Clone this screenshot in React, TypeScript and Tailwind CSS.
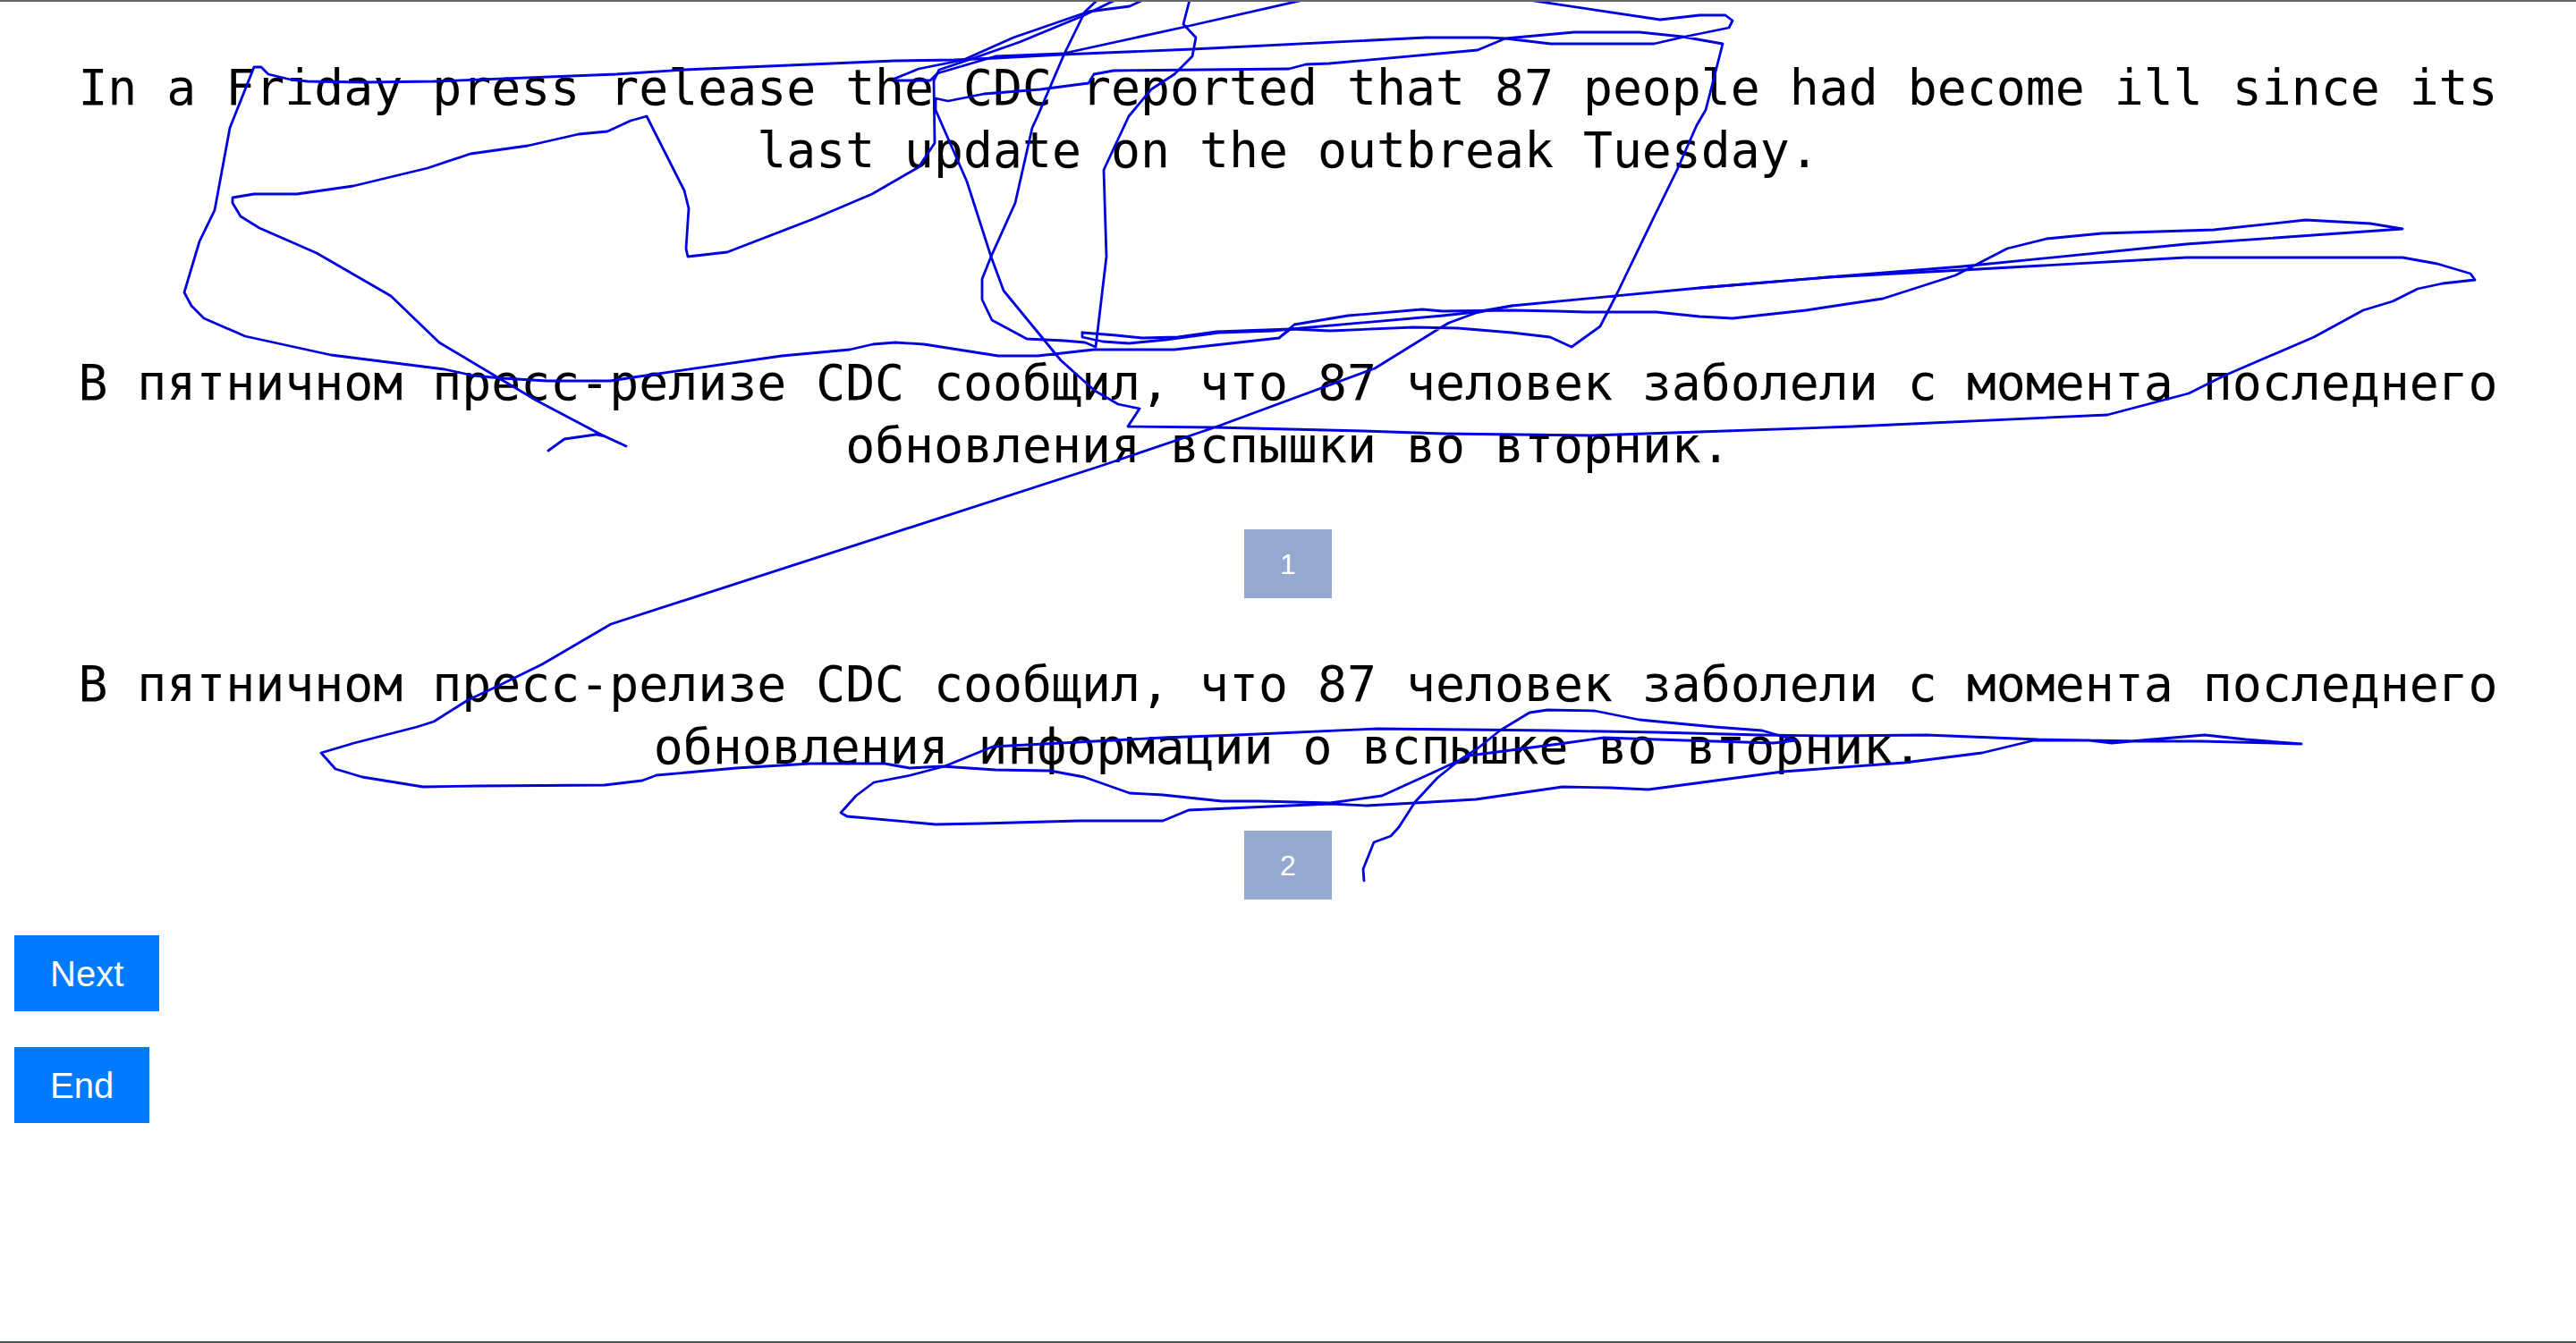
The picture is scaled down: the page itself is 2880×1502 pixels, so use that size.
const scribble: number[][] = [
  [1525,985,1524,972,1536,942,1555,935,1564,925,1582,897,1607,870,1632,850,1652,837,1677,817,1710,797,1730,794,1783,795,1833,805,1917,813,1970,817,2008,828,1983,831,1883,828,1793,825,1743,832,1643,845,1600,865,1545,890,1487,898,1408,896,1366,896,1300,889,1263,887,1212,869,1174,862,1113,861,1053,857,1017,859,989,854,906,854,823,859,734,867,718,873,676,878,536,879,473,880,405,869,375,860,359,842,396,831,466,813,485,807,523,783,555,768,606,743,683,698,1234,520,1358,478,1537,412,1613,365,1620,361,1650,350,1690,342,1900,322,2044,310,2194,302,2444,288,2686,288,2725,295,2762,306,2767,313,2731,317,2703,323,2675,337,2642,347,2587,377,2487,420,2447,440,2356,464,2072,477,1900,483,1779,487,1613,485,1524,482,1358,478,1261,477,1274,457,1250,452,1224,437,1186,403,1122,325,1108,287,1081,203,1046,123,1046,110,1060,113,1100,105,1163,100,1217,93,1223,83,1245,79,1441,77,1460,72,1486,71,1652,56,1683,43,1760,36,1833,36,1881,41,1926,49,1907,123,1897,140,1875,190,1849,243,1808,328,1789,365,1757,388,1733,377,1690,372,1630,367,1580,366,1487,370,1443,368,1430,378,1313,391,1223,391,1160,398,1116,398,1033,385,1001,383,976,385,950,391,874,398,708,422,682,426,612,426,561,423,529,420,497,413,370,397,274,376,228,356,214,342,206,327,223,270,240,235,257,143,284,75,292,75,300,83,325,89,344,91,408,92,485,91,689,83,765,78,1000,68,1067,67,1113,65,1187,61,1333,55,1594,42,1664,42,1683,43,1734,49,1849,49,1884,41,1933,31,1937,23,1929,17,1900,17,1856,22,1709,0],
  [1457,0,1325,30,1188,60,1113,63,1048,82,1040,90,1002,90,1000,88,1027,77,1047,73,1077,67,1133,42,1217,13,1263,7,1278,0],
  [1247,0,1210,18,1140,47,1080,68,1050,78,1044,90,1045,160,1027,187,975,217,909,245,813,282,769,287,767,278,770,233,765,213,723,130,705,135,679,147,647,150,590,163,526,172,478,188,395,208,332,217,284,217,260,221,260,227,269,242,290,255,354,283,437,331,491,383,558,423,600,448,670,485,700,499,676,488,666,486,631,491,613,504],
  [1227,0,1213,13,1190,60,1160,130,1154,143,1135,227,1108,287,1098,312,1098,335,1109,358,1148,379,1190,381,1213,383,1225,388,1237,287,1234,190,1262,130,1287,100,1313,83,1333,63,1337,42,1323,27,1330,0],
  [1210,372,1248,375,1277,378,1317,377,1360,371,1443,368,1613,353,1650,349,1690,342],
  [1210,372,1210,377,1233,382,1262,384,1303,380,1363,372,1423,370,1443,368],
  [1430,378,1447,363,1507,353,1590,346,1613,348,1690,347,1741,348,1773,349,1852,349,1900,354,1937,356,2019,347,2105,334,2186,308,2244,278,2288,267,2350,261,2475,257,2578,246,2650,250,2686,256,2444,273,2194,298,2044,310,1900,322],
  [2573,832,2511,827,2465,822,2394,828,2361,831,2336,828,2274,828,2216,842,2129,853,1993,863,1843,883,1800,881,1747,880,1650,894,1582,898,1528,901,1487,899,1329,906,1300,918,1206,918,1097,921,1046,922,947,913,940,909,957,890,977,875,1018,867,1056,857,1110,835,1300,825,1383,822,1540,815,1733,817,1853,819,1967,822,2050,823,2154,822,2278,827,2394,829,2461,829,2573,832],
];

function Para({ children }: { children: React.ReactNode }) {
  return <p className="px-4 text-center text-[54.8px] leading-[70px] text-black [font-family:'DejaVu_Sans_Mono',monospace]">{children}</p>;
}

function Badge({ n, className }: { n: string; className: string }) {
  return (
    <div className={`mx-auto flex h-[77px] w-[98px] items-center justify-center bg-[#94a8d0] text-[32px] text-white ${className}`}>{n}</div>
  );
}

function Btn({ label, className }: { label: string; className: string }) {
  return (
    <button className={`block h-[85px] bg-[#007bff] px-10 text-[40px] leading-[46px] text-white ${className}`}>{label}</button>
  );
}

export default function App() {
  return (
    <div className="relative h-[1502px] w-[2880px] overflow-hidden border-t-2 border-b-2 border-t-[#666666] border-b-[#4b5050] bg-white [font-family:'Liberation_Sans',Arial,sans-serif]">
      <div className="pt-[61px]">
        <Para>In a Friday press release the CDC reported that 87 people had become ill since its last update on the outbreak Tuesday.</Para>
        <div className="mt-[190px]">
          <Para>В пятничном пресс-релизе CDC сообщил, что 87 человек заболели с момента последнего обновления вспышки во вторник.</Para>
        </div>
        <Badge n="1" className="mt-[59px]" />
        <div className="mt-[61px]">
          <Para>В пятничном пресс-релизе CDC сообщил, что 87 человек заболели с момента последнего обновления информации о вспышке во вторник.</Para>
        </div>
        <Badge n="2" className="mt-[59px]" />
        <Btn label="Next" className="ml-4 mt-10" />
        <Btn label="End" className="ml-4 mt-10" />
      </div>
      <svg className="absolute left-0 top-[-2px] h-[1502px] w-[2880px]" viewBox="0 0 2880 1502" fill="none">
        {scribble.map((p, i) => (
          <polyline key={i} points={p.join(" ")} stroke="#0000e0" strokeWidth={2.8} strokeLinejoin="round" strokeLinecap="round" />
        ))}
      </svg>
    </div>
  );
}
